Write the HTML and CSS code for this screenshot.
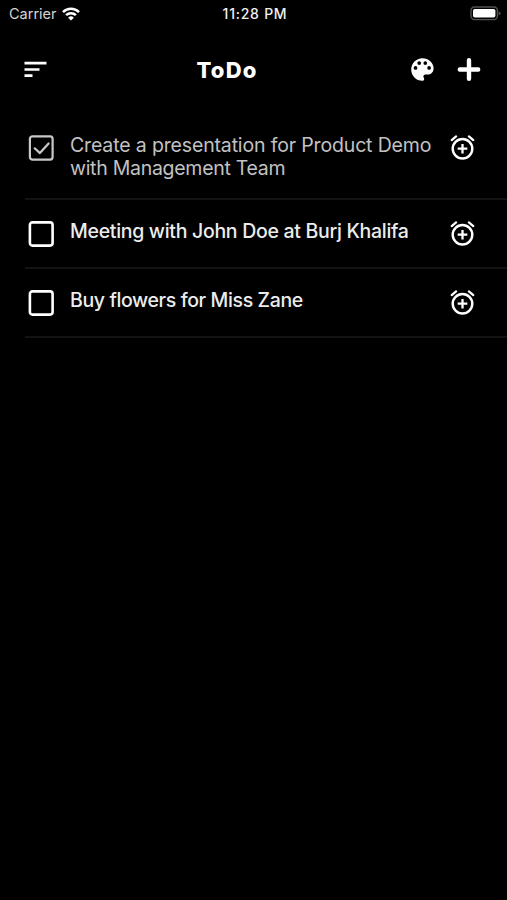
FILE: index.html
```html
<!DOCTYPE html>
<html lang="en">
<head>
<meta charset="utf-8">
<title>ToDo</title>
<link rel="stylesheet" href="styles.css">
</head>
<body>
<svg width="0" height="0" class="defs" aria-hidden="true">
  <symbol id="alarm" viewBox="0 0 24 24">
    <path stroke="currentColor" stroke-width="1.9" stroke-linecap="round" d="M6.7 2.8 3.1 5.8M17.3 2.8 20.9 5.8"/>
    <circle cx="12" cy="13" r="8.100" fill="none" stroke="currentColor" stroke-width="2"/>
    <path d="M12 9v8M8 13h8" fill="none" stroke="currentColor" stroke-width="1.9"/>
  </symbol>
</svg>
<div class="status">
  <div class="carrier"><span class="carrier-name">Carrier</span>
    <svg width="18" height="14" viewBox="0 0 18 14"><g fill="none" stroke="#fff" stroke-width="2.5"><path d="M1 5.1a11.4 11.4 0 0 1 16 0"/><path d="M4.1 8.2a7 7 0 0 1 9.8 0"/></g><path fill="#fff" d="M6.1 10.7a4.1 4.1 0 0 1 5.8 0L9 13.6z"/></svg>
  </div>
  <span class="time">11:28 PM</span>
  <svg class="battery" width="31" height="15" viewBox="0 0 31 15"><rect x="1" y="1" width="26.4" height="12.6" rx="3.5" fill="none" stroke="#525252" stroke-width="1.4"/><rect x="3" y="3" width="22.4" height="8.6" rx="1.8" fill="#fff"/><path d="M28.6 5.2q2 .8 2 2.1t-2 2.1z" fill="#525252"/></svg>
</div>
<header class="bar">
  <svg width="23" height="17" viewBox="0 0 23 17"><path d="M.5 2.1h22M.5 8.5h15M.5 14.6h8" stroke="#fff" stroke-width="2.6"/></svg>
  <h1 class="title">ToDo</h1>
  <div class="actions">
    <svg width="23" height="23" viewBox="0 0 23 23"><path fill="#fff" d="M11.4.2C5.2.2.2 5.2.2 11.5s5 11.3 11.2 11.3c1.1 0 1.8-.8 1.8-1.8 0-1-.8-1.3-.8-2.4 0-1.2.9-2 2-2h2.2c3.4 0 6-2.8 6-6.2C22.6 4.7 17.6.2 11.4.2z"/><g fill="#000"><circle cx="4.500" cy="9.900" r="1.850"/><circle cx="8.200" cy="5.100" r="1.850"/><circle cx="14.300" cy="5.100" r="1.850"/><circle cx="18.100" cy="9.900" r="1.850"/></g></svg>
    <svg width="24" height="24" viewBox="0 0 24 24"><path d="M12 2.300v18.400M2.800 11.500h18.400" stroke="#fff" stroke-width="4.400" stroke-linecap="round"/></svg>
  </div>
</header>
<ul class="list">
  <li class="item done">
    <svg class="box" width="26" height="26" viewBox="0 0 26 26"><rect x="1.900" y="1.400" width="22.700" height="23.200" rx="2.500"/><path d="m6.700 13.300 5.200 4.800L20.600 8.500"/></svg>
    <p class="text"><span class="line-first">Create a presentation for Product Demo</span><br>with Management Team</p>
    <svg class="alarm" width="29" height="29"><use href="#alarm"/></svg>
  </li>
  <li class="item">
    <svg class="box" width="26" height="26" viewBox="0 0 26 26"><rect x="1.900" y="1.400" width="22.700" height="23.200" rx="2.500"/></svg>
    <p class="text">Meeting with John Doe at Burj Khalifa</p>
    <svg class="alarm" width="29" height="29"><use href="#alarm"/></svg>
  </li>
  <li class="item">
    <svg class="box" width="26" height="26" viewBox="0 0 26 26"><rect x="1.900" y="1.400" width="22.700" height="23.200" rx="2.500"/></svg>
    <p class="text text-tight">Buy flowers for Miss Zane</p>
    <svg class="alarm" width="29" height="29"><use href="#alarm"/></svg>
  </li>
</ul>
</body>
</html>
```
FILE: styles.css
```css
* { box-sizing: border-box; }
html, body { height: 100%; }
body {
  margin: 0;
  background: #000;
  color: #fff;
  font-family: Inter, "Liberation Sans", sans-serif;
  overflow: hidden;
}
svg { display: block; flex: none; }
.defs { position: absolute; }
.status {
  display: grid;
  grid-template-columns: 1fr auto 1fr;
  align-items: center;
  height: 27px;
  padding: 0 6px 0 9px;
  font-size: 14.5px;
}
.carrier { display: flex; align-items: center; gap: 5px; color: #d4d4d4; }
.time { font-size: 14px; font-weight: 500; letter-spacing: 0.75px; color: #f0f0f0; }
.battery { justify-self: end; }
.bar {
  display: grid;
  grid-template-columns: 173px auto 1fr;
  align-items: center;
  height: 85px;
  padding: 0 26px 0 23.5px;
}
.title { margin: 0; font-size: 22px; font-weight: 800; line-height: 28px; letter-spacing: 1.2px; }
.actions { display: flex; align-items: center; justify-content: flex-end; gap: 23px; }
.list { list-style: none; margin: 0; padding: 2px 0 0 25px; }
.item {
  display: flex;
  align-items: flex-start;
  height: 69px;
  padding: 21px 30px 0 3px;
  border-bottom: 2px solid #131313;
}
.done { height: 86px; }
.box { fill: none; stroke: #fff; stroke-width: 2.6; stroke-linejoin: round; stroke-linecap: round; }
.text {
  flex: 1;
  margin: -1px 0 0 16px;
  font-size: 19.5px;
  font-weight: 500;
  line-height: 23px;
  letter-spacing: -0.3px;
  white-space: nowrap;
  color: #ececec;
}
.text-tight { letter-spacing: -0.38px; }
.done .text { color: #c2c2c2; letter-spacing: -0.28px; font-weight: 400; }
.done .line-first { letter-spacing: -0.15px; }
.done .box { stroke: #c8c8c8; stroke-width: 2.2; }
.alarm { margin-top: -2px; }
```
